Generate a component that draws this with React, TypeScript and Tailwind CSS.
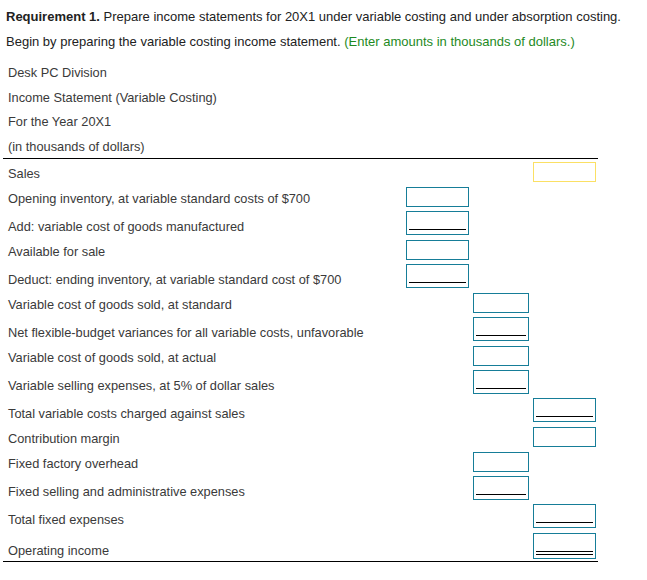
import React from "react";

type Kind = "plain" | "under" | "double";
type Row = { label: string; h: string; col: 1 | 2 | 3; kind: Kind; yellow?: boolean; last?: boolean };

const rows: Row[] = [
  { label: "Sales", h: "h-[25px]", col: 3, kind: "plain", yellow: true },
  { label: "Opening inventory, at variable standard costs of $700", h: "h-[24px]", col: 1, kind: "plain" },
  { label: "Add: variable cost of goods manufactured", h: "h-[29px]", col: 1, kind: "under" },
  { label: "Available for sale", h: "h-[24px]", col: 1, kind: "plain" },
  { label: "Deduct: ending inventory, at variable standard cost of $700", h: "h-[29px]", col: 1, kind: "under" },
  { label: "Variable cost of goods sold, at standard", h: "h-[24px]", col: 2, kind: "plain" },
  { label: "Net flexible-budget variances for all variable costs, unfavorable", h: "h-[29px]", col: 2, kind: "under" },
  { label: "Variable cost of goods sold, at actual", h: "h-[24px]", col: 2, kind: "plain" },
  { label: "Variable selling expenses, at 5% of dollar sales", h: "h-[28px]", col: 2, kind: "under" },
  { label: "Total variable costs charged against sales", h: "h-[29px]", col: 3, kind: "under" },
  { label: "Contribution margin", h: "h-[25px]", col: 3, kind: "plain" },
  { label: "Fixed factory overhead", h: "h-[24px]", col: 2, kind: "plain" },
  { label: "Fixed selling and administrative expenses", h: "h-[28px]", col: 2, kind: "under" },
  { label: "Total fixed expenses", h: "h-[29px]", col: 3, kind: "under" },
  { label: "Operating income", h: "h-[32px]", col: 3, kind: "double", last: true },
];

function Box({ kind, yellow, w }: { kind: Kind; yellow?: boolean; w: string }) {
  const border = yellow ? "border-[#fbe064]" : "border-[#167d98]";
  if (kind === "plain") {
    return <div className={`${w} h-[20px] border ${border} bg-white`} />;
  }
  if (kind === "under") {
    return (
      <div className={`${w} h-[24px] border ${border} bg-white flex flex-col justify-end pb-[4px] px-[2px]`}>
        <div className="h-px bg-black" />
      </div>
    );
  }
  return (
    <div className={`${w} h-[26px] border ${border} bg-white flex flex-col justify-end pb-[3px] px-[2px] gap-[2px]`}>
      <div className="h-px bg-black" />
      <div className="h-px bg-black" />
    </div>
  );
}

export default function App() {
  return (
    <div className="w-[647px] h-[580px] bg-white font-['Liberation_Sans',Arial,sans-serif] text-[13px]">
      <div className="pl-[6px] pt-[4px] text-[#222]">
        <div className="leading-[25px] h-[25px] whitespace-nowrap">
          <span className="font-bold">Requirement 1.</span> Prepare income statements for 20X1 under variable costing and under absorption costing.
        </div>
        <div className="leading-[25px] h-[25px] whitespace-nowrap">
          Begin by preparing the variable costing income statement.{" "}
          <span className="text-[#1e8a1e]">(Enter amounts in thousands of dollars.)</span>
        </div>
      </div>
      <div className="ml-[3px] mt-[7px] w-[595px] text-[#3a3a3a] text-[12.8px]">
        <div className="pl-[5px] h-[25px] leading-[23px]">Desk PC Division</div>
        <div className="pl-[5px] h-[24px] leading-[24px]">Income Statement (Variable Costing)</div>
        <div className="pl-[5px] h-[25px] leading-[24px]">For the Year 20X1</div>
        <div className="pl-[5px] h-[24px] leading-[23px] border-b border-black">(in thousands of dollars)</div>
        {rows.map((r, i) => {
          const boxH = r.kind === "plain" ? "h-[20px]" : r.kind === "under" ? "h-[24px]" : "h-[26px]";
          const pb = r.kind === "double" ? "pb-[1px]" : "pb-[1px]";
          return (
            <div
              key={i}
              className={`${r.h} flex items-start pt-[3px] ${r.last ? "border-b border-black" : ""}`}
            >
              <div className={`w-[403px] ${boxH} flex items-end pl-[5px] ${pb} leading-[14px] whitespace-nowrap`}>
                {r.label}
              </div>
              <div className="w-[63px]">{r.col === 1 && <Box kind={r.kind} yellow={r.yellow} w="w-[63px]" />}</div>
              <div className="w-[56px] ml-[4px]">{r.col === 2 && <Box kind={r.kind} yellow={r.yellow} w="w-[56px]" />}</div>
              <div className="w-[63px] ml-[4px]">{r.col === 3 && <Box kind={r.kind} yellow={r.yellow} w="w-[63px]" />}</div>
            </div>
          );
        })}
      </div>
    </div>
  );
}
